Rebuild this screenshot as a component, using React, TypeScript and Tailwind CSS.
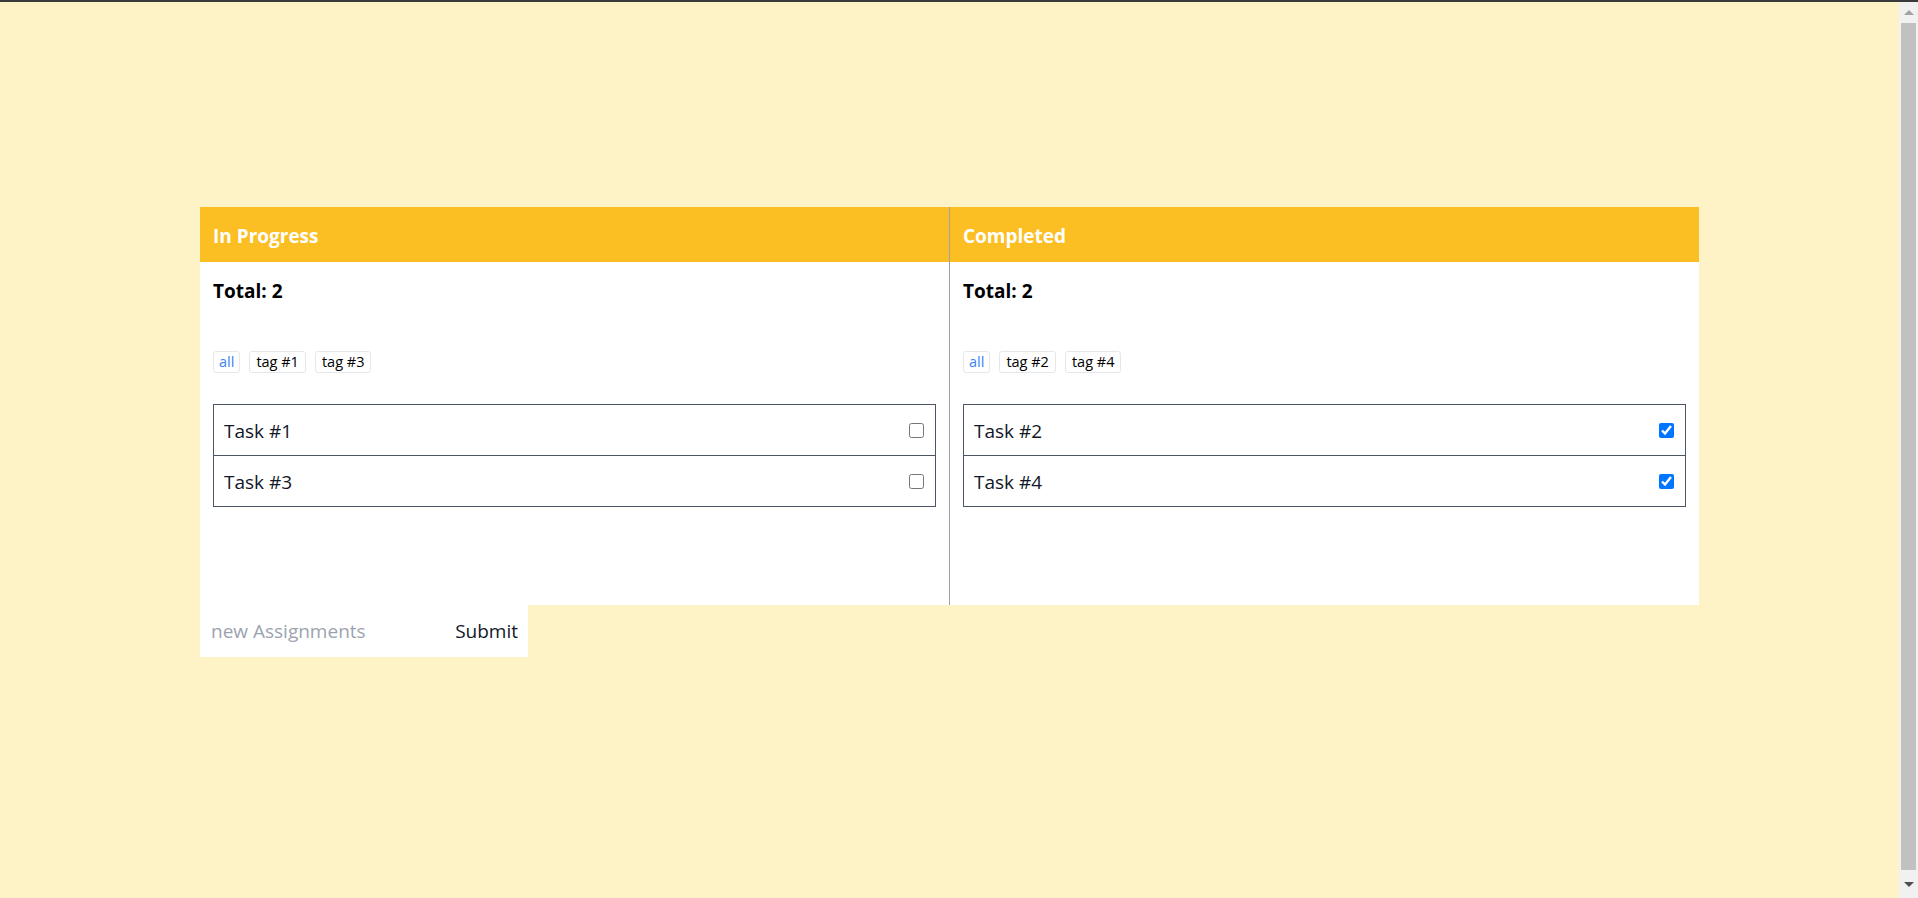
import React from "react";

const font = { fontFamily: '"Open Sans", "Noto Sans", Arial, sans-serif' };

type Task = { name: string; done: boolean };

function Column({
  title,
  tags,
  tasks,
  divider,
}: {
  title: string;
  tags: string[];
  tasks: Task[];
  divider?: boolean;
}) {
  return (
    <div className={"flex flex-col " + (divider ? "w-[750px] border-r border-[#9ca3af]" : "w-[749px]")}>
      <div className="h-[55px] bg-[#fbbf24] flex items-center px-[13px] pt-[3px]">
        <span className="text-[19px] font-bold text-white leading-none">{title}</span>
      </div>
      <div className="h-[343px] bg-white px-[13px] pt-[15px]">
        <div className="text-[19px] font-bold text-black leading-[28px]">Total: {tasks.length}</div>
        <div className="mt-[46px] flex gap-[9px]">
          <span className="h-[22px] px-[5px] flex items-center rounded-[3px] border border-[#e5e7eb] text-[14.5px] text-[#3b82f6]">
            all
          </span>
          {tags.map((t) => (
            <span
              key={t}
              className="h-[22px] px-[6px] flex items-center rounded-[3px] border border-[#e5e7eb] text-[14.5px] text-black"
            >
              {t}
            </span>
          ))}
        </div>
        <div className="mt-[31px] border border-[#4b5563]">
          {tasks.map((task, i) => (
            <div
              key={task.name}
              className={
                "box-content h-[50px] flex items-center justify-between pl-[10px] pr-[11px] " +
                (i < tasks.length - 1 ? "border-b border-[#4b5563]" : "")
              }
            >
              <span className="text-[19px] text-[#111827] pt-[2px]">{task.name}</span>
              <input
                type="checkbox"
                defaultChecked={task.done}
                className="w-[15px] h-[15px] m-0 accent-[#0075ff]"
              />
            </div>
          ))}
        </div>
      </div>
    </div>
  );
}

export default function App() {
  return (
    <div className="w-[1918px] h-[898px] overflow-hidden flex flex-col bg-[#fef3c7]" style={font}>
      <div className="h-[2px] bg-[#3a3a3a] shrink-0" />
      <div className="flex flex-1">
        <div className="flex-1 pt-[205px]">
          <div className="ml-[200px] w-[1499px] flex">
            <Column
              title="In Progress"
              tags={["tag #1", "tag #3"]}
              tasks={[
                { name: "Task #1", done: false },
                { name: "Task #3", done: false },
              ]}
              divider
            />
            <Column
              title="Completed"
              tags={["tag #2", "tag #4"]}
              tasks={[
                { name: "Task #2", done: true },
                { name: "Task #4", done: true },
              ]}
            />
          </div>
          <div className="ml-[200px] w-[328px] h-[52px] bg-white flex items-center pl-[11px] pr-[10px]">
            <input
              className="flex-1 min-w-0 outline-none text-[19px] text-black placeholder:text-[#9ca3af] bg-transparent"
              placeholder="new Assignments"
            />
            <button className="text-[19px] text-[#111827] bg-transparent">Submit</button>
          </div>
        </div>
        <div className="w-[19px] bg-[#f1f1f1] flex flex-col items-center">
          <div className="h-[21px] w-full flex items-center justify-center">
            <div className="w-0 h-0 border-l-[5px] border-r-[5px] border-b-[5px] border-l-transparent border-r-transparent border-b-[#a3a3a3]" />
          </div>
          <div className="w-[15px] h-[847px] bg-[#c1c1c1]" />
          <div className="flex-1 w-full flex items-center justify-center">
            <div className="w-0 h-0 border-l-[5px] border-r-[5px] border-t-[5px] border-l-transparent border-r-transparent border-t-[#505050]" />
          </div>
        </div>
      </div>
    </div>
  );
}
